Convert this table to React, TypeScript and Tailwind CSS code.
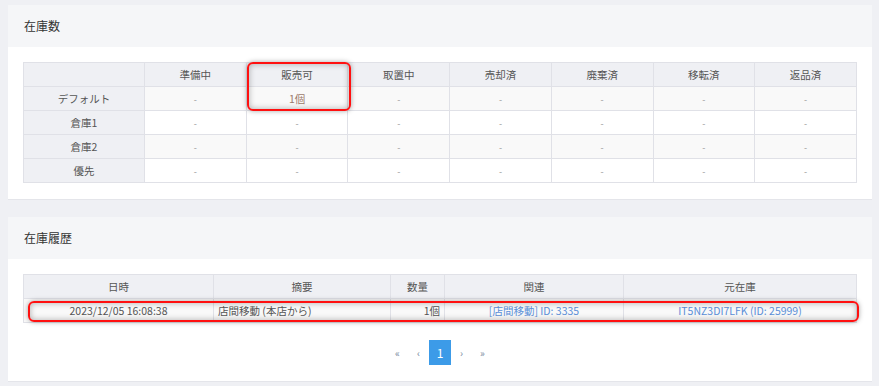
const statuses = ["準備中", "販売可", "取置中", "売却済", "廃棄済", "移転済", "返品済"];
const warehouses = ["デフォルト", "倉庫1", "倉庫2", "優先"];

const Highlight = ({ className }: { className: string }) => (
  <div
    className={`absolute rounded-[6px] border-2 border-[#ff1010] shadow-[0_0_5px_rgba(0,0,0,0.35),inset_0_0_6px_rgba(0,0,0,0.3)] pointer-events-none ${className}`}
  />
);

const Card = ({ title, children }: { title: string; children: React.ReactNode }) => (
  <div className="w-[864px] bg-white shadow-[0_1px_0_#e4e5ea]">
    <div className="h-[42px] bg-[#f5f6f8] px-4 flex items-center text-[12px] text-[#333]">{title}</div>
    {children}
  </div>
);

export default function App() {
  return (
    <div
      className="min-h-[386px] bg-[#eff0f4] pl-2 pt-[5px] flex flex-col gap-[18px]"
      style={{ fontFamily: '"Noto Sans CJK JP", "Noto Sans", sans-serif' }}
    >
      <Card title="在庫数">
        <div className="px-[15px] pt-[15px] pb-4">
          <div className="relative">
            <table className="w-[834px] border-collapse table-fixed text-[10.5px] text-center">
              <colgroup>
                <col className="w-[121px]" />
                {statuses.map((s) => (
                  <col key={s} />
                ))}
              </colgroup>
              <thead>
                <tr className="bg-[#eff0f4] text-[#555]">
                  <th className="h-6 p-0 font-normal border border-[#e0e1e7]"></th>
                  {statuses.map((s) => (
                    <th key={s} className="h-6 p-0 font-normal border border-[#e0e1e7]">{s}</th>
                  ))}
                </tr>
              </thead>
              <tbody>
                {warehouses.map((w, i) => (
                  <tr key={w} className={i % 2 === 0 ? "bg-[#f9f9f9]" : "bg-white"}>
                    <td className="h-6 p-0 bg-[#eff0f4] text-[#555] border border-[#e0e1e7]">{w}</td>
                    {statuses.map((s, j) => (
                      <td key={s} className="h-6 p-0 border border-[#e0e1e7]">
                        {i === 0 && j === 1 ? (
                          <span className="text-[#9c7b6c]">1個</span>
                        ) : (
                          <span className="text-[#999] text-[9px]">-</span>
                        )}
                      </td>
                    ))}
                  </tr>
                ))}
              </tbody>
            </table>
            <Highlight className="left-[224px] top-0 w-[104px] h-[49px]" />
          </div>
        </div>
      </Card>

      <Card title="在庫履歴">
        <div className="px-[15px] pt-[15px] pb-4">
          <div className="relative">
            <table className="w-[834px] border-collapse table-fixed text-[10.5px]">
              <colgroup>
                <col className="w-[190px]" />
                <col className="w-[177px]" />
                <col className="w-[54px]" />
                <col className="w-[179px]" />
                <col />
              </colgroup>
              <thead>
                <tr className="bg-[#eff0f4] text-[#555]">
                  {["日時", "摘要", "数量", "関連", "元在庫"].map((h) => (
                    <th key={h} className="h-6 p-0 font-normal text-center border border-[#e0e1e7]">{h}</th>
                  ))}
                </tr>
              </thead>
              <tbody>
                <tr className="bg-[#f9f9f9] text-[#555]">
                  <td className="h-6 p-0 text-center border border-[#e0e1e7]">2023/12/05 16:08:38</td>
                  <td className="h-6 py-0 px-1 text-left border border-[#e0e1e7]">店間移動 (本店から)</td>
                  <td className="h-6 py-0 px-1 text-right border border-[#e0e1e7]">1個</td>
                  <td className="h-6 p-0 text-center border border-[#e0e1e7] text-[#5b8fd8]">[店間移動] ID: 3335</td>
                  <td className="h-6 p-0 text-center border border-[#e0e1e7] text-[#5b8fd8]">IT5NZ3DI7LFK (ID: 25999)</td>
                </tr>
              </tbody>
            </table>
            <Highlight className="left-[5px] top-[27px] w-[831px] h-[21px]" />
          </div>
          <div className="flex justify-center items-center mt-[17px] text-[10px] text-[#7a8aa0]">
            <span className="w-[21px] text-center">«</span>
            <span className="w-[21px] text-center">‹</span>
            <span className="w-[22px] h-[25px] bg-[#3c9be8] text-white text-[12px] flex items-center justify-center">1</span>
            <span className="w-[21px] text-center">›</span>
            <span className="w-[21px] text-center">»</span>
          </div>
        </div>
      </Card>
    </div>
  );
}
